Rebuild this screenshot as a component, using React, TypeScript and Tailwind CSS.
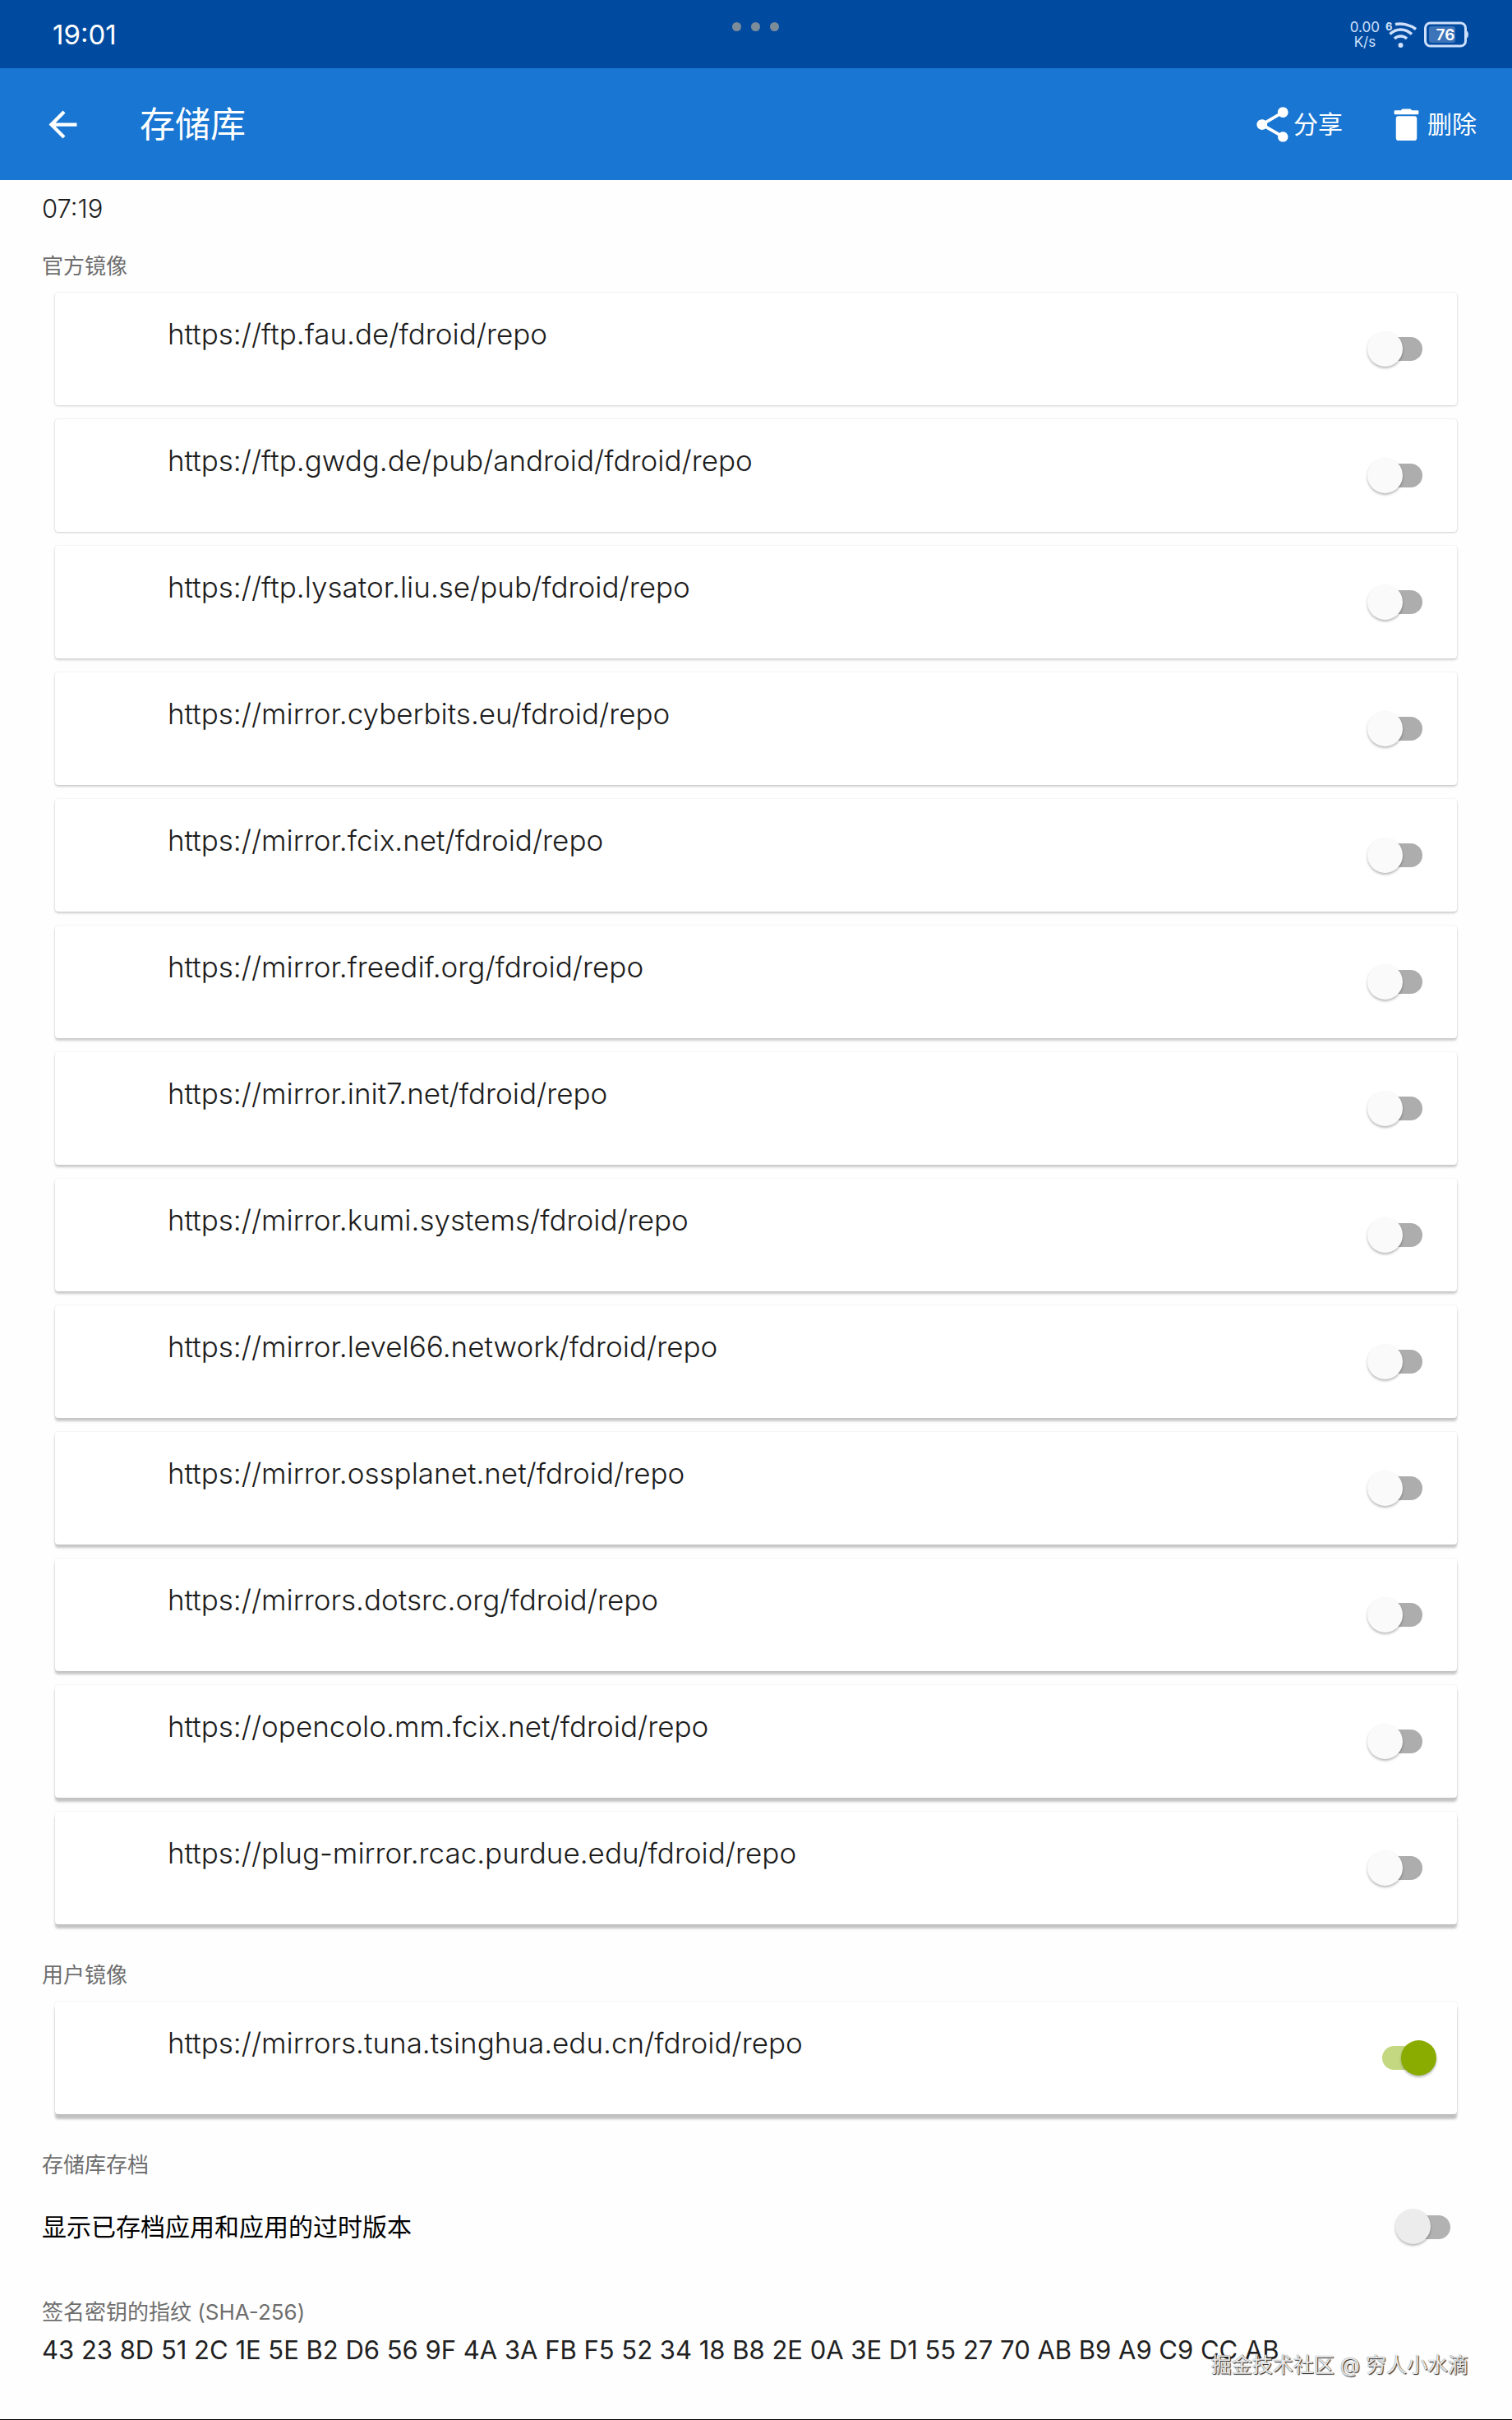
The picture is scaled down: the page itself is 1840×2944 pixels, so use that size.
import { useId, useState } from "react";

const officialMirrors = [
  "https://ftp.fau.de/fdroid/repo",
  "https://ftp.gwdg.de/pub/android/fdroid/repo",
  "https://ftp.lysator.liu.se/pub/fdroid/repo",
  "https://mirror.cyberbits.eu/fdroid/repo",
  "https://mirror.fcix.net/fdroid/repo",
  "https://mirror.freedif.org/fdroid/repo",
  "https://mirror.init7.net/fdroid/repo",
  "https://mirror.kumi.systems/fdroid/repo",
  "https://mirror.level66.network/fdroid/repo",
  "https://mirror.ossplanet.net/fdroid/repo",
  "https://mirrors.dotsrc.org/fdroid/repo",
  "https://opencolo.mm.fcix.net/fdroid/repo",
  "https://plug-mirror.rcac.purdue.edu/fdroid/repo",
];

const fingerprint =
  "43 23 8D 51 2C 1E 5E B2 D6 56 9F 4A 3A FB F5 52 34 18 B8 2E 0A 3E D1 55 27 70 AB B9 A9 C9 CC AB";

// the light sits above the screen, so cards further down throw a longer shadow
function cardShadow(depth: number) {
  const y = 1 + Math.round(depth / 3);
  const alpha = 0.16 + depth * 0.006;
  return `0 ${y}px 3px rgba(0,0,0,${alpha}), 0 0 2px rgba(0,0,0,0.12)`;
}

type SwitchProps = {
  id: string;
  defaultChecked?: boolean;
  dim?: boolean;
};

function Switch({ id, defaultChecked = false, dim = false }: SwitchProps) {
  const [checked, setChecked] = useState(defaultChecked);

  return (
    <input
      id={id}
      type="checkbox"
      role="switch"
      checked={checked}
      onChange={(e) => setChecked(e.target.checked)}
      className={`relative flex h-11 w-[84px] shrink-0 cursor-pointer appearance-none items-center justify-center before:h-[29px] before:w-[49px] before:rounded-full before:content-[''] checked:before:bg-[#c3d880] after:absolute after:top-0 after:left-0 after:size-[43px] after:rounded-full after:shadow-[0_2px_3px_rgba(0,0,0,0.28)] after:content-[''] checked:after:left-[41px] checked:after:bg-[#8aab00] ${dim ? "before:bg-[#b2b2b2] after:bg-[#ececec]" : "before:bg-[#adadad] after:bg-[#fafafa]"}`}
    />
  );
}

function MirrorCard({ url, depth, enabled }: { url: string; depth: number; enabled?: boolean }) {
  const id = useId();

  return (
    <li
      className="flex h-[137px] items-center justify-between rounded-sm bg-white pr-[25px] pl-[137px]"
      style={{ boxShadow: cardShadow(depth) }}
    >
      <label htmlFor={id} className="self-start pt-[29px] text-[35px] leading-[42px] font-light text-[#1c1c1c]">
        {url}
      </label>
      <Switch id={id} defaultChecked={enabled} />
    </li>
  );
}

function SectionTitle({ children }: { children: React.ReactNode }) {
  return <h2 className="text-[26px] leading-9 text-[#6e6e6e]">{children}</h2>;
}

function StatusBar() {
  return (
    <div className="grid h-[83px] grid-cols-3 items-center bg-[#004ba0] px-[52px] text-white">
      <span className="pl-3 text-[33px] leading-10">19:01</span>
      <div className="flex gap-3 self-start justify-self-center pt-[27px]">
        <span className="size-[11px] rounded-full bg-[#7d8c99]" />
        <span className="size-[11px] rounded-full bg-[#7d8c99]" />
        <span className="size-[11px] rounded-full bg-[#7d8c99]" />
      </div>
      <div className="flex items-center justify-end text-[#cfe0fb]">
        <div className="text-center text-[17px] leading-[18px]">
          <div>0.00</div>
          <div>K/s</div>
        </div>
        <svg className="ml-1.5 h-9 w-10 overflow-visible" viewBox="0 0 40 36" fill="none" stroke="currentColor" strokeWidth="3.500">
          <path d="M13 5.500C21 4 31 6 38 11.500" />
          <path d="M6.500 17.500C14 10 25 10 33 17.500" />
          <path d="M12 23C16 19 23 19 27 23" />
          <circle cx="19.500" cy="31" r="3" fill="currentColor" stroke="none" />
          <text x="1" y="13" fontSize="13" fontWeight="700" fill="currentColor" stroke="none">6</text>
        </svg>
        <svg className="ml-2 h-8 w-[55px]" viewBox="0 0 55 32">
          <rect x="1.500" y="2" width="49" height="28" rx="6" fill="none" stroke="currentColor" strokeWidth="3" />
          <path d="M52 11.500C54.500 13 54.500 19 52 20.500Z" fill="currentColor" />
          <rect x="6" y="6" width="32" height="20" rx="3" fill="#3d73b8" />
          <text x="26" y="23" textAnchor="middle" fontSize="19" fontWeight="600" fill="#ffffff">76</text>
        </svg>
      </div>
    </div>
  );
}

function AppBar() {
  return (
    <header className="flex h-[136px] items-center bg-[#1976d2] pr-[43px] pl-[51px] text-white">
      <button type="button" aria-label="返回" className="cursor-pointer">
        <svg className="size-[51px]" viewBox="0 0 24 24" fill="currentColor">
          <path d="M20 11H7.830l5.590-5.590L12 4l-8 8 8 8 1.410-1.410L7.830 13H20v-2z" />
        </svg>
      </button>
      <h1 className="ml-[68px] text-[43px] leading-[52px]">存储库</h1>
      <div className="ml-auto flex items-center gap-[52px] text-[30px] leading-10">
        <button type="button" className="flex cursor-pointer items-center">
          <svg className="size-[51px]" viewBox="0 0 24 24" fill="currentColor">
            <path d="M18 16.080c-.760 0-1.440.300-1.960.770L8.910 12.700c.050-.230.090-.460.090-.700s-.040-.470-.090-.700l7.050-4.110c.540.500 1.250.810 2.040.810 1.660 0 3-1.340 3-3s-1.340-3-3-3-3 1.340-3 3c0 .240.040.470.090.700L8.040 9.810C7.500 9.310 6.790 9 6 9c-1.660 0-3 1.340-3 3s1.340 3 3 3c.790 0 1.500-.310 2.040-.810l7.120 4.160c-.050.210-.080.430-.080.650 0 1.610 1.310 2.920 2.920 2.920s2.920-1.310 2.920-2.920-1.310-2.920-2.920-2.920z" />
          </svg>
          分享
        </button>
        <button type="button" className="flex cursor-pointer items-center">
          <svg className="size-[51px]" viewBox="0 0 24 24" fill="currentColor">
            <path d="M9.700 3h4.600l.900.900h3.200a.6.6 0 0 1 .6.600v1.100a.6.6 0 0 1-.6.600H5.600a.6.6 0 0 1-.6-.600V4.500a.6.6 0 0 1 .6-.600h3.200z" />
            <path d="M6 8.600A1.400 1.400 0 0 1 7.400 7.200h9.200A1.400 1.400 0 0 1 18 8.600v11A1.600 1.600 0 0 1 16.400 21.200H7.600A1.600 1.600 0 0 1 6 19.600z" />
          </svg>
          删除
        </button>
      </div>
    </header>
  );
}

export default function App() {
  return (
    <div className="relative flex min-h-screen flex-col bg-[#fefefe] font-['Inter','Noto_Sans_CJK_SC',sans-serif]">
      <StatusBar />
      <AppBar />

      <main className="px-[51px] pt-[15px]">
        <p className="text-[31px] leading-10 font-light text-[#1c1c1c]">07:19</p>

        <section className="mt-8">
          <SectionTitle>官方镜像</SectionTitle>
          <ul className="mx-4 mt-[14px] flex flex-col gap-[17px]">
            {officialMirrors.map((url, i) => (
              <MirrorCard key={url} url={url} depth={i} />
            ))}
          </ul>
        </section>

        <section className="mt-11">
          <SectionTitle>用户镜像</SectionTitle>
          <ul className="mx-4 mt-[14px]">
            <MirrorCard url="https://mirrors.tuna.tsinghua.edu.cn/fdroid/repo" depth={14} enabled />
          </ul>
        </section>

        <section className="mt-11">
          <SectionTitle>存储库存档</SectionTitle>
          <div className="mt-[35px] flex items-center justify-between pr-[7px]">
            <label htmlFor="archive" className="text-[30px] leading-10 text-black">
              显示已存档应用和应用的过时版本
            </label>
            <Switch id="archive" dim />
          </div>
        </section>

        <section className="mt-16">
          <SectionTitle>签名密钥的指纹 (SHA-256)</SectionTitle>
          <p className="mt-2 text-[31px] leading-10 text-[#212121]">{fingerprint}</p>
        </section>
      </main>

      <div className="absolute right-[53px] bottom-[49px] text-[25px] leading-9 text-[#e8e8e8] [text-shadow:1px_1px_1px_#222,0_0_1px_#666]">
        掘金技术社区 @ 穷人小水滴
      </div>

      <div className="mt-auto h-px bg-black" />
    </div>
  );
}
